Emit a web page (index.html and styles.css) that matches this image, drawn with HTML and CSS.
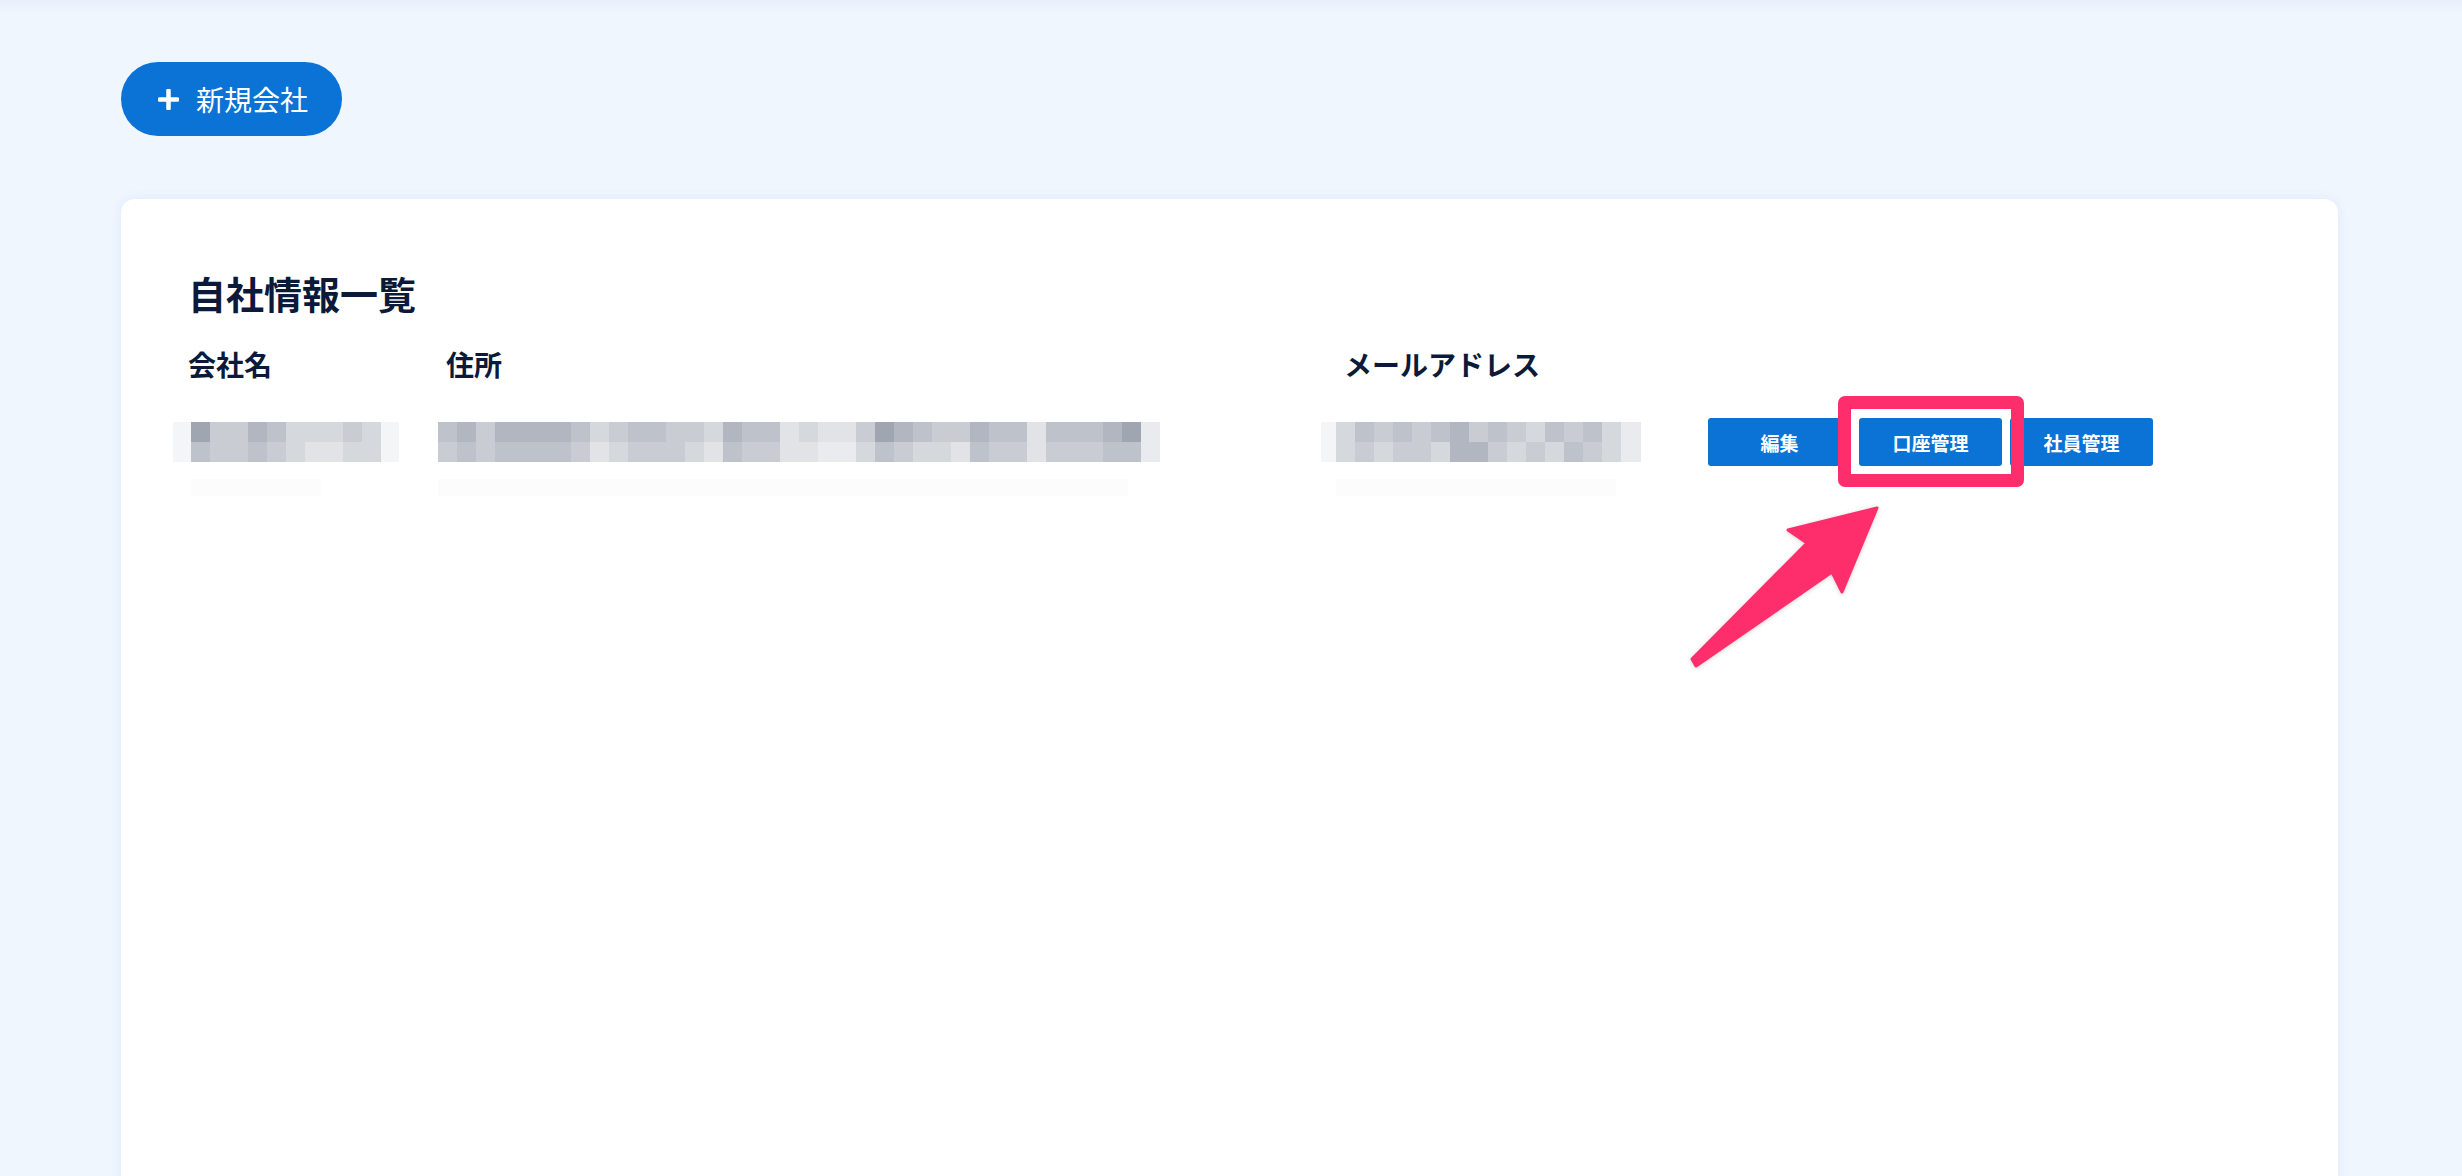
FILE: index.html
```html
<!DOCTYPE html>
<html lang="ja">
<head>
<meta charset="utf-8">
<title>自社情報一覧</title>
<link rel="stylesheet" href="styles.css">
</head>
<body>
<div class="page">
  <button class="new-btn" type="button">
    <svg class="plus" width="21" height="21" viewBox="0 0 21 21"><path d="M10.5 1.5v18M1.5 10.5h18" stroke="#fff" stroke-width="4.5" stroke-linecap="round"/></svg>
    <span>新規会社</span>
  </button>

  <section class="card">
    <h1 class="title">自社情報一覧</h1>
    <div class="table">
      <div class="th">会社名</div>
      <div class="th">住所</div>
      <div class="th">メールアドレス</div>
      <div class="th"></div>

      <div class="td">
        <div class="mosaic m-co">
          <i class="h"></i><i class="a"></i><i class="d"></i><i class="d"></i><i class="b"></i><i class="c"></i><i class="e"></i><i class="e"></i><i class="e"></i><i class="d"></i><i class="e"></i><i class="h"></i>
          <i class="h"></i><i class="c"></i><i class="d"></i><i class="d"></i><i class="c"></i><i class="d"></i><i class="e"></i><i class="f"></i><i class="f"></i><i class="e"></i><i class="e"></i><i class="h"></i>
        </div>
        <div class="faint co-faint"></div>
      </div>
      <div class="td">
        <div class="mosaic m-ad">
          <i class="c"></i><i class="b"></i><i class="d"></i><i class="b"></i><i class="b"></i><i class="b"></i><i class="b"></i><i class="c"></i><i class="e"></i><i class="d"></i><i class="c"></i><i class="c"></i><i class="d"></i><i class="d"></i><i class="e"></i><i class="b"></i><i class="c"></i><i class="c"></i><i class="f"></i><i class="e"></i><i class="f"></i><i class="f"></i><i class="d"></i><i class="a"></i><i class="b"></i><i class="c"></i><i class="d"></i><i class="d"></i><i class="b"></i><i class="c"></i><i class="c"></i><i class="f"></i><i class="c"></i><i class="c"></i><i class="c"></i><i class="b"></i><i class="a"></i><i class="g"></i>
          <i class="d"></i><i class="c"></i><i class="d"></i><i class="c"></i><i class="c"></i><i class="c"></i><i class="c"></i><i class="d"></i><i class="f"></i><i class="e"></i><i class="d"></i><i class="d"></i><i class="d"></i><i class="e"></i><i class="f"></i><i class="c"></i><i class="d"></i><i class="d"></i><i class="f"></i><i class="f"></i><i class="g"></i><i class="g"></i><i class="e"></i><i class="c"></i><i class="d"></i><i class="e"></i><i class="e"></i><i class="f"></i><i class="c"></i><i class="d"></i><i class="d"></i><i class="f"></i><i class="d"></i><i class="d"></i><i class="d"></i><i class="c"></i><i class="c"></i><i class="g"></i>
        </div>
        <div class="faint ad-faint"></div>
      </div>
      <div class="td">
        <div class="mosaic m-em">
          <i class="h"></i><i class="e"></i><i class="c"></i><i class="d"></i><i class="c"></i><i class="d"></i><i class="c"></i><i class="b"></i><i class="d"></i><i class="c"></i><i class="d"></i><i class="e"></i><i class="c"></i><i class="d"></i><i class="c"></i><i class="e"></i><i class="g"></i>
          <i class="h"></i><i class="e"></i><i class="d"></i><i class="e"></i><i class="d"></i><i class="d"></i><i class="e"></i><i class="b"></i><i class="b"></i><i class="d"></i><i class="e"></i><i class="d"></i><i class="e"></i><i class="c"></i><i class="d"></i><i class="e"></i><i class="g"></i>
        </div>
        <div class="faint em-faint"></div>
      </div>
      <div class="td actions">
        <button class="act" type="button">編集</button>
        <div class="act-wrap">
          <button class="act" type="button">口座管理</button>
          <div class="highlight"></div>
          <svg class="arrow" width="200" height="170" viewBox="0 0 200 170">
            <polygon points="189,3 100,25 119,38 4,154 8,161 11,159 144,67 154,87" fill="#fe2e6c" stroke="#fe2e6c" stroke-width="3" stroke-linejoin="round"/>
          </svg>
        </div>
        <button class="act" type="button">社員管理</button>
      </div>
    </div>
  </section>
</div>
</body>
</html>
```

FILE: styles.css
```css
* { box-sizing: border-box; }

html, body {
  margin: 0;
  padding: 0;
}

body {
  background: linear-gradient(to bottom, #e8f0fb 0px, #eff6fe 14px, #eff6fe 100%);
  font-family: "Noto Sans CJK JP", "Noto Sans", sans-serif;
  color: #0c1a3a;
  overflow: hidden;
  height: 1176px;
}

.page {
  padding: 62px 124px 0 121px;
}

.new-btn {
  display: inline-flex;
  align-items: center;
  justify-content: center;
  gap: 17px;
  width: 221px;
  height: 74px;
  padding: 0 0 0 3px;
  border: none;
  border-radius: 37px;
  background: #0b73d5;
  color: #fff;
  font-family: inherit;
  font-size: 28px;
  font-weight: 400;
  line-height: 1;
}

.plus { display: block; }

.card {
  margin-top: 63px;
  background: #fff;
  border-radius: 14px;
  box-shadow: 0 0 12px rgba(40, 110, 210, 0.09);
  min-height: 1000px;
  padding: 75px 67px;
}

.title {
  margin: 0;
  font-size: 38px;
  line-height: 38px;
  font-weight: 700;
}

.table {
  display: grid;
  grid-template-columns: 258px 898px 364px auto;
  margin-top: 38px;
  align-items: start;
}

.th {
  font-size: 28px;
  line-height: 28px;
  font-weight: 700;
  height: 28px;
}

.td {
  margin-top: 40px;
  padding-top: 4px;
}

.mosaic {
  display: grid;
  grid-auto-rows: 20px;
  height: 40px;
}
.mosaic i { display: block; }

.m-co { margin-left: -15px; grid-template-columns: 18px repeat(10, 19px) 18px; }
.m-ad { margin-left: -8px; grid-template-columns: repeat(37, 19px) 19px; }
.m-em { margin-left: -23px; grid-template-columns: 15px repeat(15, 19px) 20px; }

.a { background: #a0a6b1; }
.b { background: #b1b6c0; }
.c { background: #bec2ca; }
.d { background: #c9ccd3; }
.e { background: #d5d8dd; }
.f { background: #e1e3e7; }
.g { background: #eaebee; }
.h { background: #f4f5f7; }

.faint {
  margin-top: 17px;
  height: 17px;
  background: #fcfcfd;
}
.co-faint { margin-left: 3px; width: 130px; }
.ad-faint { margin-left: -8px; width: 690px; }
.em-faint { margin-left: -8px; width: 280px; }

.actions {
  display: flex;
  gap: 8px;
  padding-top: 0;
}

.act {
  width: 143px;
  height: 48px;
  border: none;
  border-radius: 3px;
  background: #0b73d5;
  color: #fff;
  font-family: inherit;
  font-size: 19px;
  font-weight: 700;
  padding: 0;
  line-height: 1;
}

.act-wrap {
  position: relative;
  display: flex;
}

.highlight {
  position: absolute;
  left: -21px;
  right: -22px;
  top: -22px;
  bottom: -21px;
  border: 13px solid #fe2e6c;
  border-radius: 7px;
  pointer-events: none;
}

.arrow {
  position: absolute;
  left: -171px;
  top: 87px;
  filter: drop-shadow(0 1px 2px rgba(0, 0, 0, 0.18));
  pointer-events: none;
}
```
